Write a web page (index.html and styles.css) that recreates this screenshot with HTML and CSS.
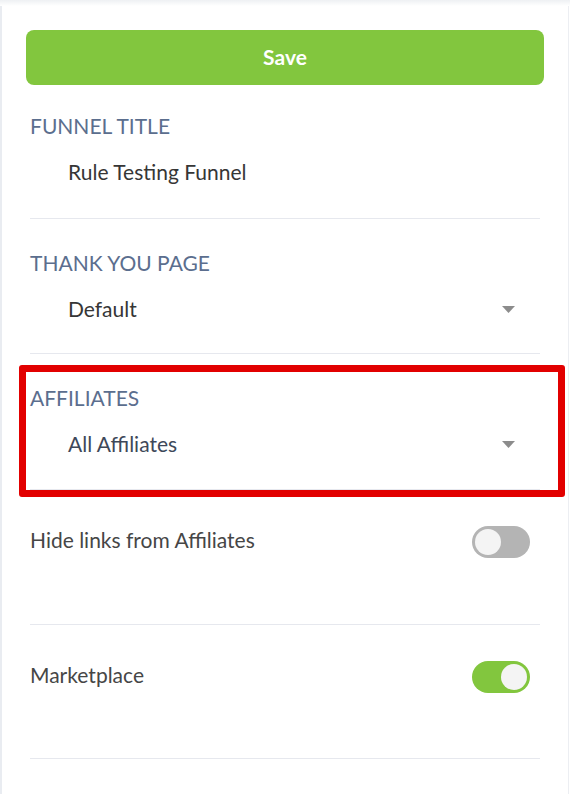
FILE: index.html
```html
<!DOCTYPE html>
<html lang="en">
<head>
<meta charset="utf-8">
<title>Funnel settings</title>
<link rel="stylesheet" href="styles.css">
</head>
<body>
<div class="shade"></div>
<div class="panel">
  <button class="save" type="button">Save</button>

  <div class="field first">
    <div class="label">FUNNEL TITLE</div>
    <div class="value">Rule Testing Funnel</div>
  </div>

  <div class="field second">
    <div class="label">THANK YOU PAGE</div>
    <div class="value select">
      <span>Default</span>
      <svg class="caret" width="13" height="7" viewBox="0 0 13 7"><path d="M0 0H13L6.5 7Z" fill="#8c8c8c"/></svg>
    </div>
  </div>

  <div class="field highlighted">
    <div class="label">AFFILIATES</div>
    <div class="value select dark">
      <span>All Affiliates</span>
      <svg class="caret" width="13" height="7" viewBox="0 0 13 7"><path d="M0 0H13L6.5 7Z" fill="#8c8c8c"/></svg>
    </div>
    <div class="highlight"></div>
  </div>

  <div class="toggle-row">
    <span class="toggle-label">Hide links from Affiliates</span>
    <span class="switch off"><span class="knob"></span></span>
  </div>

  <div class="toggle-row">
    <span class="toggle-label">Marketplace</span>
    <span class="switch on"><span class="knob"></span></span>
  </div>
</div>
</body>
</html>
```
FILE: styles.css
```css
html, body {
  margin: 0;
  padding: 0;
  background: #ffffff;
}
body {
  font-family: Lato, "Open Sans", Arial, sans-serif;
  width: 570px;
  height: 794px;
  overflow: hidden;
  position: relative;
}
.shade {
  height: 6px;
  background: linear-gradient(#eef0f3, #ffffff);
}
.panel {
  box-sizing: border-box;
  width: 569px;
  height: 788px;
  border-left: 2px solid #e9ecf1;
  border-right: 1px solid #eceef2;
  padding: 24px 24px 0 24px;
}
.save {
  display: block;
  width: 518px;
  height: 55px;
  border: 0;
  border-radius: 8px;
  background: #82c63e;
  color: #ffffff;
  font-family: Lato, "Open Sans", Arial, sans-serif;
  font-weight: 700;
  font-size: 21px;
  line-height: 24px;
  padding: 0 0 2px 0;
  margin: 0;
}
.field {
  position: relative;
  margin: 0 4px;
  padding: 32px 0 33px 0;
  border-bottom: 1px solid #e6e8ee;
}
.field.first {
  padding-top: 29px;
  padding-bottom: 34px;
}
.field.second {
  padding-bottom: 32px;
}
.label {
  font-size: 21px;
  line-height: 24px;
  color: #5b6e8e;
}
.value {
  margin-top: 22px;
  padding-left: 38px;
  font-size: 21px;
  line-height: 24px;
  color: #363636;
}
.value.select {
  display: flex;
  align-items: center;
  justify-content: space-between;
  padding-right: 25px;
}
.value.dark {
  color: #3e4859;
}
.caret {
  display: block;
}
.highlight {
  position: absolute;
  left: -11px;
  top: 11px;
  width: 546px;
  height: 132px;
  box-sizing: border-box;
  border: 7px solid #e20000;
  border-radius: 3px;
  pointer-events: none;
}
.toggle-row {
  box-sizing: border-box;
  height: 135px;
  margin: 0 4px;
  padding: 36px 10px 0 0;
  border-bottom: 1px solid #e6e8ee;
  display: flex;
  justify-content: space-between;
  align-items: flex-start;
}
.toggle-row + .toggle-row {
  height: 134px;
}
.toggle-label {
  margin-top: 2px;
  font-size: 21px;
  line-height: 24px;
  color: #464646;
}
.switch {
  box-sizing: border-box;
  width: 58px;
  height: 32px;
  border-radius: 16px;
  padding: 3px;
  display: flex;
}
.switch.off {
  background: #b4b4b4;
  justify-content: flex-start;
}
.switch.on {
  background: #82c63e;
  justify-content: flex-end;
}
.knob {
  width: 26px;
  height: 26px;
  border-radius: 50%;
  background: #f4f4f4;
}
```
